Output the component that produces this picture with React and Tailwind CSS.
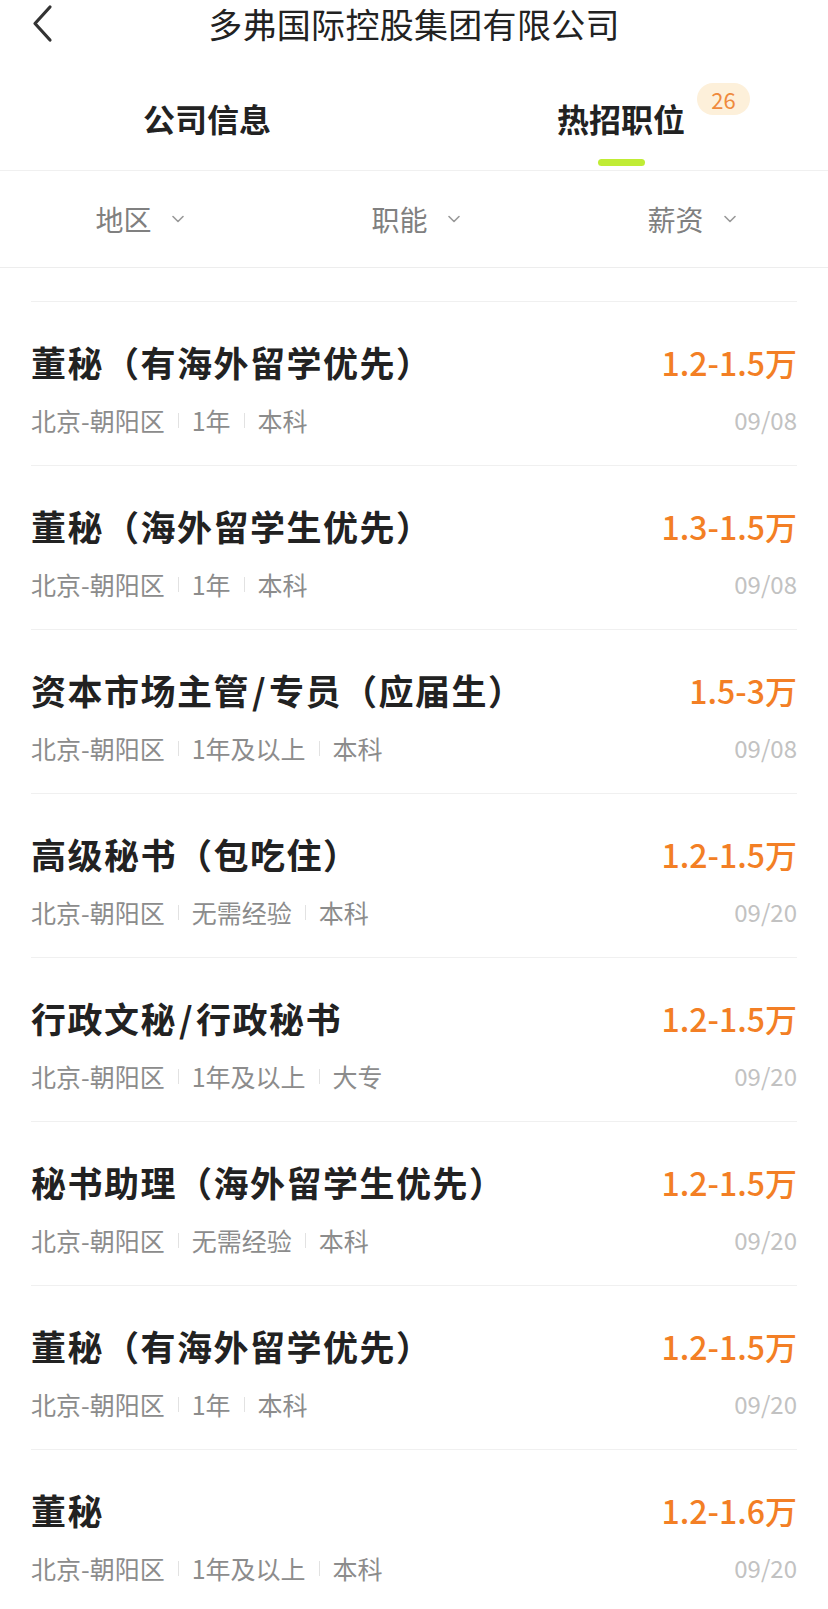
import { useState } from 'react'

const jobs = [
  { title: '董秘（有海外留学优先）', salary: '1.2-1.5万', exp: '1年', edu: '本科', date: '09/08' },
  { title: '董秘（海外留学生优先）', salary: '1.3-1.5万', exp: '1年', edu: '本科', date: '09/08' },
  { title: '资本市场主管/专员（应届生）', salary: '1.5-3万', exp: '1年及以上', edu: '本科', date: '09/08' },
  { title: '高级秘书（包吃住）', salary: '1.2-1.5万', exp: '无需经验', edu: '本科', date: '09/20' },
  { title: '行政文秘/行政秘书', salary: '1.2-1.5万', exp: '1年及以上', edu: '大专', date: '09/20' },
  { title: '秘书助理（海外留学生优先）', salary: '1.2-1.5万', exp: '无需经验', edu: '本科', date: '09/20' },
  { title: '董秘（有海外留学优先）', salary: '1.2-1.5万', exp: '1年', edu: '本科', date: '09/20' },
  { title: '董秘', salary: '1.2-1.6万', exp: '1年及以上', edu: '本科', date: '09/20' },
]

const filters = ['地区', '职能', '薪资']

function Sep() {
  return <span className="mx-[13px] h-[15px] w-px bg-[#e2e2e2]" />
}

// the slash in the app font is a bit wider than Noto's
function Title({ text }) {
  const parts = text.split('/')
  return (
    <div className="text-[35px] leading-[48px] font-semibold tracking-[1.5px] text-[#222]">
      {parts.map((p, i) => (
        <span key={i}>
          {i > 0 ? <span className="px-[2px]">/</span> : null}
          {p}
        </span>
      ))}
    </div>
  )
}

function JobRow({ job }) {
  return (
    <div className="border-t border-[#f0f0f0] pt-[36px] pb-[28px]">
      <div className="flex h-[48px] items-center justify-between">
        <Title text={job.title} />
        <div className="text-[32px] leading-[48px] font-medium text-[#f37f25]">{job.salary}</div>
      </div>
      <div className="mt-[17px] flex h-[34px] items-center justify-between text-[25px] leading-[34px]">
        <div className="flex items-center text-[#8c8c8c]">
          <span>北京-朝阳区</span>
          <Sep />
          <span>{job.exp}</span>
          <Sep />
          <span>{job.edu}</span>
        </div>
        <div className="text-[24px] text-[#c2c2c2]">{job.date}</div>
      </div>
    </div>
  )
}

export default function App() {
  const [tab, setTab] = useState(1)

  return (
    <div className="min-h-[1609px] w-[828px] overflow-hidden bg-white font-['Noto_Sans_CJK_SC',sans-serif]">
      {/* header */}
      <div className="grid h-[48px] grid-cols-[1fr_auto_1fr] items-center">
        <div className="pl-[31px]">
          <svg width="24" height="40" viewBox="0 0 24 40" fill="none">
            <path d="M19 3 L4 19.5 L19 36" stroke="#333" strokeWidth="3.2" strokeLinecap="round" strokeLinejoin="round" />
          </svg>
        </div>
        <div className="text-[34px] leading-[48px] tracking-[0.3px] text-[#222]">多弗国际控股集团有限公司</div>
        <div />
      </div>

      {/* tabs */}
      <div className="flex h-[123px] border-b border-[#f0f0f0]">
        {['公司信息', '热招职位'].map((t, i) => (
          <button key={t} onClick={() => setTab(i)} className="flex flex-1 flex-col items-center pt-[53px]">
            <span className="relative h-[34px] text-[32px] leading-[34px] font-bold text-[#222]">
              {t}
              {i === 1 ? (
                <span className="absolute top-[-18px] left-[calc(100%+12px)] flex h-[32px] w-[53px] items-center justify-center rounded-full bg-[#fdf0da] text-[22px] leading-none font-normal text-[#ef8a3c]">
                  26
                </span>
              ) : null}
            </span>
            <span className={`mt-[24px] h-[7px] w-[47px] rounded-full ${tab === i ? 'bg-[#c0ec35]' : 'bg-transparent'}`} />
          </button>
        ))}
      </div>

      {/* filters */}
      <div className="grid h-[97px] grid-cols-3 border-b border-[#ededed]">
        {filters.map((f) => (
          <div key={f} className="flex items-center justify-center gap-[20px] pl-[3px] text-[28px] text-[#808080]">
            <span>{f}</span>
            <svg width="12" height="8" viewBox="0 0 12 8" fill="none">
              <path d="M1 1.5 L6 6.5 L11 1.5" stroke="#999" strokeWidth="1.6" strokeLinecap="round" strokeLinejoin="round" />
            </svg>
          </div>
        ))}
      </div>

      {/* list */}
      <div className="px-[31px] pt-[33px]">
        {jobs.map((j, i) => (
          <JobRow key={i} job={j} />
        ))}
      </div>
    </div>
  )
}
